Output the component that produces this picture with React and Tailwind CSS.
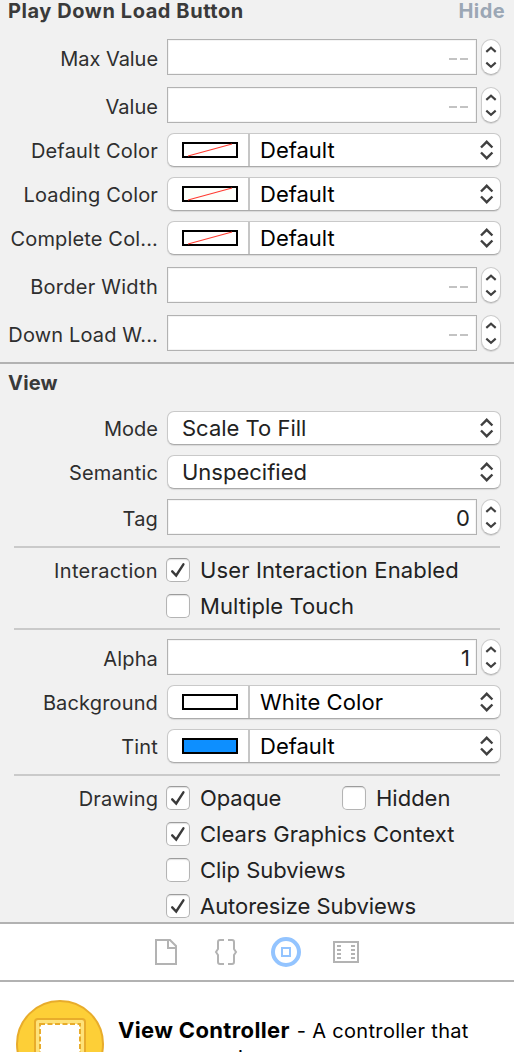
import React from 'react';

function Label({ children, track = 'tracking-[0.15px]', shift = 'pt-[3px]' }) {
  return (
    <div className={`w-[158px] shrink-0 whitespace-nowrap text-right text-[20px] leading-6 text-[#2e2e2e] ${shift} ${track}`}>
      {children}
    </div>
  );
}

function Stepper() {
  return (
    <div className="ml-1 flex h-9 w-5 shrink-0 items-center justify-center rounded-[10px] border border-[#cbcbcb] border-b-[#b4b4b4] bg-white shadow-[0_1px_1px_rgba(0,0,0,0.12)]">
      <svg width="12" height="24" viewBox="0 0 12 24" fill="none" stroke="#404040" strokeWidth="2.1">
        <path d="M1.300 6.900 6 2.700l4.700 4.200M1.300 17.600 6 21.800l4.700-4.200" />
      </svg>
    </div>
  );
}

function FieldRow({ label, value, gap, track }) {
  return (
    <div className={`flex h-9 items-center ${gap}`}>
      <Label track={track}>{label}</Label>
      <div className="ml-[9px] flex h-9 w-[310px] shrink-0 items-center justify-end border border-[#b2b2b2] bg-white pr-[6px] text-[22px] leading-6 text-[#222] shadow-[inset_0_0_0_1px_#f4f4f4]">
        {value === undefined ? (
          <span className="mt-[3px] flex gap-[3px] pr-[2px]">
            <i className="h-[2px] w-[8px] bg-[#c3c3c3]" />
            <i className="h-[2px] w-[8px] bg-[#c3c3c3]" />
          </span>
        ) : (
          <span className="pt-[2px]">{value}</span>
        )}
      </div>
      <Stepper />
    </div>
  );
}

function Swatch({ color, empty }) {
  return (
    <div className="flex h-full w-[82px] shrink-0 items-center border-r-2 border-[#c6c6c6] pl-[14px]">
      <svg width="56" height="16" viewBox="0 0 56 16">
        <rect x="1" y="1" width="54" height="14" fill={color} stroke="#000" strokeWidth="2" />
        {empty && <path d="M6 14 50 2" stroke="#ff3b30" strokeWidth="1.100" />}
      </svg>
    </div>
  );
}

function PopupRow({ label, value, gap, track, vtrack = '', swatch, empty }) {
  return (
    <div className={`flex h-[34px] items-center ${gap}`}>
      <Label track={track} shift="pt-[2px]">{label}</Label>
      <div className="ml-[9px] flex h-[34px] w-[334px] shrink-0 items-center rounded-[7px] border border-[#c9c9c9] border-b-[#ababab] bg-white shadow-[0_1px_1px_rgba(0,0,0,0.1)]">
        {swatch && <Swatch color={swatch} empty={empty} />}
        <span className={`flex-1 whitespace-nowrap text-[22px] leading-6 ${swatch ? 'pl-[10px] text-black' : 'pl-[14px] text-[#222]'} ${vtrack}`}>
          {value}
        </span>
        <svg className="mr-[5px] shrink-0" width="16" height="22" viewBox="0 0 16 22" fill="none" stroke="#404040" strokeWidth="2.400">
          <path d="M2 8.500 7.700 2.800l5.700 5.700M2 13.500 7.700 19.200l5.700-5.700" />
        </svg>
      </div>
    </div>
  );
}

function Check({ on, children, track = '', width = '' }) {
  return (
    <div className={`flex h-6 shrink-0 items-center ${width}`}>
      <div className="flex size-6 shrink-0 items-center justify-center rounded-[5px] border border-[#b4b4b4] border-t-[#9c9c9c] bg-white shadow-[inset_0_1px_1px_rgba(0,0,0,0.12)]">
        {on && (
          <svg width="16" height="16" viewBox="0 0 16 16" fill="none" stroke="#3a3a3a" strokeWidth="2.400" strokeLinecap="round">
            <path d="M2.200 9.300 6.200 13.500 13.400 2.300" />
          </svg>
        )}
      </div>
      <span className={`ml-[10px] whitespace-nowrap text-[22px] leading-6 text-[#222] ${track}`}>{children}</span>
    </div>
  );
}

function CheckRow({ label, gap, track, children }) {
  return (
    <div className={`flex h-6 items-center ${gap}`}>
      <Label track={track} shift="pt-px">{label}</Label>
      <div className="ml-2 flex">{children}</div>
    </div>
  );
}

function Divider({ gap }) {
  return <div className={`ml-[14px] h-[2px] w-[486px] bg-[#cacaca] ${gap}`} />;
}

function LibraryTabs() {
  return (
    <div className="flex h-[60px] shrink-0 items-center justify-center border-y-2 border-[#b2b2b2] bg-white">
      <svg width="240" height="56" viewBox="137 924 240 56" fill="none" stroke="#b3b3b3" strokeWidth="2">
        <path d="M156 940h14l6 6v18h-20zM168 940v8h8" />
        <path d="M224 940h-4q-2 0-2 2v7l-2 3 2 3v7q0 2 2 2h4M228 940h4q2 0 2 2v7l2 3-2 3v7q0 2-2 2h-4" />
        <circle cx="286" cy="952" r="13" stroke="#93c4ff" strokeWidth="4" />
        <path d="M282 948h8v8h-8z" stroke="#93c4ff" />
        <path d="M334 942h24v20h-24z" />
        <path d="M337 946h4M337 950h4M337 954h4M337 958h4M351 946h4M351 950h4M351 954h4M351 958h4" />
      </svg>
    </div>
  );
}

export default function App() {
  return (
    <div className="flex h-[1052px] w-[514px] flex-col overflow-hidden bg-[#f1f1f1] font-['Inter','Liberation_Sans',sans-serif]">
      <section className="h-[362px] shrink-0">
        <header className="flex h-[22px] items-center justify-between pl-2 pr-[9px] text-[20px] font-bold leading-[22px]">
          <h2 className="tracking-[0.57px] text-[#3a3a3a]">Play Down Load Button</h2>
          <span className="tracking-[0.4px] text-[#9ba7b5]">Hide</span>
        </header>
        <FieldRow gap="mt-[17px]" label="Max Value" track="tracking-[-0.05px]" />
        <FieldRow gap="mt-3" label="Value" track="tracking-[0.05px]" />
        <PopupRow gap="mt-[10px]" label="Default Color" value="Default" swatch="#fff" empty track="tracking-[0.2px]" />
        <PopupRow gap="mt-[10px]" label="Loading Color" value="Default" swatch="#fdfffa" empty />
        <PopupRow gap="mt-[10px]" label="Complete Col..." value="Default" swatch="#fff" empty />
        <FieldRow gap="mt-3" label="Border Width" track="tracking-[0.25px]" />
        <FieldRow gap="mt-3" label="Down Load W..." />
      </section>
      <section className="h-[560px] shrink-0 border-t-2 border-[#b2b2b2]">
        <h2 className="h-[22px] pl-2 pt-[8px] text-[20px] font-bold leading-[22px] tracking-[0.2px] text-[#3a3a3a]">View</h2>
        <PopupRow gap="mt-[25px]" label="Mode" value="Scale To Fill" track="tracking-[0px]" />
        <PopupRow gap="mt-[10px]" label="Semantic" value="Unspecified" />
        <FieldRow gap="mt-[10px]" label="Tag" value="0" />
        <Divider gap="mt-[11px]" />
        <CheckRow gap="mt-[10px]" label="Interaction" track="tracking-[0.3px]">
          <Check on track="tracking-[0.13px]">User Interaction Enabled</Check>
        </CheckRow>
        <CheckRow gap="mt-3">
          <Check track="tracking-[0.07px]">Multiple Touch</Check>
        </CheckRow>
        <Divider gap="mt-[10px]" />
        <FieldRow gap="mt-[9px]" label="Alpha" value="1" />
        <PopupRow gap="mt-[10px]" label="Background" value="White Color" vtrack="tracking-[0.1px]" swatch="#fff" />
        <PopupRow gap="mt-[10px]" label="Tint" value="Default" swatch="#0d8fff" />
        <Divider gap="mt-[11px]" />
        <CheckRow gap="mt-[10px]" label="Drawing" track="tracking-[0.1px]">
          <Check on width="w-[176px]" track="tracking-[-0.15px]">Opaque</Check>
          <Check>Hidden</Check>
        </CheckRow>
        <CheckRow gap="mt-3">
          <Check on track="tracking-[0.05px]">Clears Graphics Context</Check>
        </CheckRow>
        <CheckRow gap="mt-3">
          <Check track="tracking-[-0.05px]">Clip Subviews</Check>
        </CheckRow>
        <CheckRow gap="mt-3">
          <Check on track="tracking-[-0.04px]">Autoresize Subviews</Check>
        </CheckRow>
      </section>
      <LibraryTabs />
      <div className="flex h-[70px] shrink-0 items-start overflow-hidden bg-white pl-4 pt-[18px]">
        <svg className="shrink-0" width="88" height="88" viewBox="0 0 88 88">
          <circle cx="44" cy="44" r="43" fill="#fdcf37" stroke="#e8ac2b" strokeWidth="2" />
          <rect x="19" y="19" width="50" height="50" rx="3" fill="#fee27a" stroke="#e8ac2b" strokeWidth="2" />
          <rect x="24" y="24" width="40" height="40" fill="#fff" stroke="#e8ac2b" strokeWidth="2" strokeDasharray="5 2.500" />
        </svg>
        <div className="ml-[14px] mt-[16px] w-[380px] whitespace-nowrap text-[20px] text-black">
          <p className="flex h-7 items-baseline leading-7">
            <b className="text-[22px] tracking-[0.35px]">View Controller</b>
            <span className="ml-[7px] tracking-[0.32px]">- A controller that</span>
          </p>
          <p className="leading-7">manages a view.</p>
        </div>
      </div>
    </div>
  );
}
